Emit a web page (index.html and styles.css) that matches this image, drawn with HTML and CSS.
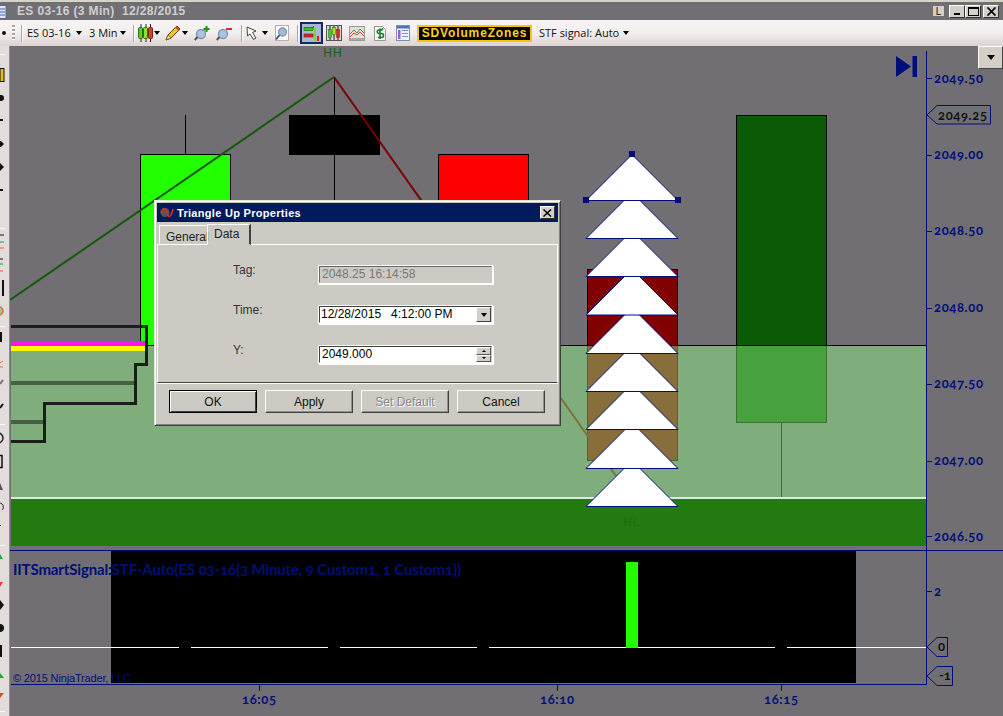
FILE: index.html
```html
<!DOCTYPE html>
<html lang="en">
<head>
<meta charset="utf-8">
<title>ES 03-16 (3 Min) 12/28/2015</title>
<link rel="stylesheet" href="styles.css">
</head>
<body>
<div class="app">
  <header class="titlebar">
    <svg class="doc-icon" width="7" height="14" viewBox="0 0 7 14"><rect x="-3" y="0.5" width="9" height="13" fill="#dfe6f2" stroke="#5a6a90"/><path d="M-2 4H5M-2 7H5M-2 10H5" stroke="#3c62c0"/></svg>
    <span class="title-text">ES 03-16 (3 Min)&nbsp; 12/28/2015</span>
    <span class="win-l">L</span>
    <span class="win-btn"><i class="glyph-min"></i></span>
    <span class="win-btn"><i class="glyph-max"></i></span>
    <span class="win-btn win-close">
      <svg width="11" height="9" viewBox="0 0 11 9"><path d="M1.5 0.5L9.5 8.5M9.5 0.5L1.5 8.5" stroke="#000" stroke-width="1.7"/></svg>
    </span>
  </header>

  <nav class="toolbar">
    <i class="stub-dot"></i>
    <i class="grip"></i>
    <i class="sep m6"></i>
    <span class="tb-text w43 m5">ES 03-16</span>
    <i class="arrow m6"></i>
    <span class="tb-text w25 m7">3 Min</span>
    <i class="arrow m6"></i>
    <i class="sep m7"></i>
    <svg class="ico m4" width="15" height="18" viewBox="0 0 15 18">
      <path d="M3 0V18M8 0V18M12.5 0V18" stroke="#222"/>
      <rect x="0.5" y="3.5" width="4" height="11" rx="1" fill="#5ad20a" stroke="#2c6a10"/>
      <rect x="5.5" y="3.5" width="4" height="11" rx="1" fill="#8ae02a" stroke="#2c6a10"/>
      <rect x="10.5" y="3.5" width="4" height="11" rx="1" fill="#e83a1c" stroke="#7a2010"/>
    </svg>
    <i class="arrow m1"></i>
    <svg class="ico m5" width="16" height="16" viewBox="0 0 16 16">
      <path d="M1 15L3 10L12 1L15 4L6 13Z" fill="#f6c71e" stroke="#5a4510"/>
      <path d="M1 15L3 10L6 13Z" fill="#f3dcb0" stroke="#5a4510" stroke-width=".6"/>
      <path d="M11 2L14 5" stroke="#c24a2a" stroke-width="2"/>
    </svg>
    <i class="arrow m1"></i>
    <svg class="ico m6" width="16" height="16" viewBox="0 0 16 16">
      <circle cx="7" cy="9" r="4.5" fill="#a8c4e8" stroke="#8a96a8" stroke-width="1.4"/>
      <path d="M3.5 12L0.8 15" stroke="#555" stroke-width="2"/>
      <path d="M12.5 1V7M9.500 4H15.500" stroke="#109a10" stroke-width="2"/>
    </svg>
    <svg class="ico m6" width="16" height="16" viewBox="0 0 16 16">
      <circle cx="7" cy="9" r="4.5" fill="#a8c4e8" stroke="#8a96a8" stroke-width="1.4"/>
      <path d="M3.5 12L0.8 15" stroke="#555" stroke-width="2"/>
      <path d="M10 4H16" stroke="#e02a2a" stroke-width="2"/>
    </svg>
    <i class="sep m9"></i>
    <svg class="ico m4" width="13" height="15" viewBox="0 0 13 15">
      <path d="M1 1L1.500 10L4 8L7.500 13.500L10 12L6.500 6.500L10 5Z" fill="#fff" stroke="#444"/>
    </svg>
    <i class="arrow m3"></i>
    <svg class="ico m7" width="14" height="16" viewBox="0 0 14 16">
      <rect x="0.500" y="0.500" width="13" height="15" fill="#fdfdfd" stroke="#b0b0b0"/>
      <circle cx="7.500" cy="7" r="4" fill="#9dbbe0" stroke="#8a96a8" stroke-width="1.400"/>
      <path d="M4.500 10L1 14.500" stroke="#555" stroke-width="2"/>
    </svg>
    <i class="sep m8"></i>
    <span class="tb-active m2">
      <svg width="17" height="17" viewBox="0 0 17 17">
        <path d="M1 3H9L11 1.500" stroke="#111" fill="none"/>
        <rect x="1" y="2.500" width="9" height="3" fill="#2ecb1a" stroke="#235a18" stroke-width=".6"/>
        <rect x="1" y="9" width="9" height="3" fill="#e02020" stroke="#6a1a18" stroke-width=".6"/>
        <rect x="11" y="3" width="2" height="13" fill="#6fe020"/>
        <rect x="14" y="11" width="2" height="5" fill="#e02020"/>
      </svg>
    </span>
    <svg class="ico m3" width="16" height="16" viewBox="0 0 16 16">
      <rect x="0.500" y="0.500" width="15" height="15" fill="#d8d4d0" stroke="#555"/>
      <path d="M4 1V15M8 1V15M12 1V15" stroke="#222"/>
      <rect x="2.500" y="4.500" width="3" height="8" fill="#3ccf20" stroke="#256a18" stroke-width=".5"/>
      <rect x="6.500" y="2.500" width="3" height="7" fill="#a6e620" stroke="#256a18" stroke-width=".5"/>
      <rect x="10.500" y="4.500" width="3" height="8" fill="#e02a20" stroke="#7a1a10" stroke-width=".5"/>
    </svg>
    <svg class="ico m7" width="16" height="15" viewBox="0 0 16 15">
      <rect x="0.500" y="0.500" width="15" height="14" fill="#e2e0da" stroke="#9a9a9a"/>
      <path d="M1 8L5 4L8 7L11 3L15 7" stroke="#2aa040" fill="none"/>
      <path d="M1 11L5 7L8 9L11 6L15 10" stroke="#d84030" fill="none"/>
      <path d="M1 12H15V14H1Z" fill="#a8a8a8"/>
    </svg>
    <svg class="ico m9" width="12" height="15" viewBox="0 0 12 15">
      <path d="M0.500 0.500H8.500L11.500 3.500V14.500H0.500Z" fill="#f6f6f2" stroke="#9a9a9a"/>
      <path d="M8.500 3.500V2M4 11.500H7.500A1.500 1.500 0 0 0 7.500 7.500H5A1.500 1.500 0 0 1 5 4H8.500M6 2.500V13" fill="none" stroke="#0d7a2c" stroke-width="1.500"/>
    </svg>
    <svg class="ico m10" width="14" height="16" viewBox="0 0 14 16">
      <rect x="0.500" y="0.500" width="13" height="15" fill="#eef2fa" stroke="#7e8cb0"/>
      <rect x="1" y="1" width="12" height="2.500" fill="#4a72c8"/>
      <rect x="2" y="5" width="2.500" height="9" fill="#9a5ae0"/>
      <path d="M6 5.500H12M6 8.500H12M6 11.500H12" stroke="#7a92c8"/>
    </svg>
    <span class="sd-zones m7">SDVolumeZones</span>
    <span class="tb-text w79 m7">STF signal: Auto</span>
    <i class="arrow m5"></i>
    <i class="toolbar-fill"></i>
  </nav>

  <div class="workspace">
    <aside class="sidebar">
      <svg width="9" height="670" viewBox="0 46 9 670">
        <path d="M0 54.500H5M0 228.500H5M0 326.500H5M0 424.500H5M0 545.500H5M0 711.500H5" stroke="#fff"/>
        <rect x="0" y="68.500" width="4" height="13" fill="#e2bc10" stroke="#111"/>
        <circle cx="1" cy="98" r="3" fill="#111"/>
        <rect x="0" y="119" width="3" height="2" fill="#111"/>
        <path d="M0 141H1L4 144L1 147H0Z" fill="#111"/>
        <path d="M0 163L4 167L0 171Z" fill="#111"/>
        <rect x="0" y="189" width="3" height="2" fill="#111"/>
        <path d="M0 235H4" stroke="#111"/><path d="M0 242H4" stroke="#1e9a4a"/><path d="M0 248H4" stroke="#ff5a20"/>
        <path d="M0 259H3" stroke="#111"/><path d="M0 264H3" stroke="#1e9a4a"/><path d="M0 271H3" stroke="#ff5a20"/>
        <rect x="2" y="280" width="2" height="16" fill="#111"/>
        <circle cx="-1" cy="311" r="4" fill="#9ccc9c" stroke="#e06a3a" stroke-width="1.500"/>
        <rect x="0" y="332" width="2" height="10" fill="#111"/>
        <path d="M0 363L3 361M0 367H3" stroke="#f07040"/>
        <path d="M0 384L3 380" stroke="#777" stroke-width="2"/>
        <path d="M0 408L3 404" stroke="#111" stroke-width="2"/>
        <circle cx="-2" cy="438" r="5" fill="none" stroke="#222" stroke-width="1.500"/>
        <rect x="-3" y="455.500" width="5" height="12" fill="none" stroke="#111" stroke-width="1.500"/>
        <path d="M0 483L3 490H0Z" fill="#555"/>
        <path d="M0 503A4 4 0 0 1 2 510" fill="none" stroke="#333"/>
        <rect x="0" y="525" width="1" height="1" fill="#333"/>
        <path d="M0 554L3 559H0Z" fill="#21a33a"/>
        <path d="M0 582H3L0 587Z" fill="#f0402a"/>
        <path d="M0 600L4 605L0 610Z" fill="#111"/>
        <circle cx="0" cy="628" r="4" fill="#111"/>
        <rect x="0" y="645" width="2" height="12" fill="#111"/>
        <path d="M0 673L4 678H0Z" fill="#21a33a"/>
        <path d="M0 693H4L0 698Z" fill="#f0402a"/>
      </svg>
    </aside>

    <main class="chart">
      <svg class="chart-svg" width="993" height="670" viewBox="10 46 993 670">
        <!-- price panel: bars -->
        <path class="wick" d="M185.500 115V154M334.500 77V345M483.500 154V345"/>
        <rect class="c-green" x="140.500" y="154.500" width="90" height="191"/>
        <rect class="c-black" x="289.500" y="115.500" width="90" height="39"/>
        <rect class="c-red" x="438.500" y="154.500" width="90" height="191"/>
        <rect class="c-maroon" x="587.500" y="269.500" width="90" height="191"/>
        <rect class="c-dark" x="736.500" y="115.500" width="90" height="307"/>
        <path class="wick" d="M781.500 423V497"/>
        <path class="swing-up" d="M10 300L334 77"/>
        <path class="swing-down" d="M334 77L616 476"/>

        <!-- supply zone drawn over the bars -->
        <rect class="zone" x="11" y="345" width="915" height="152"/>
        <path class="zone-top" d="M146 345.500H926"/>
        <rect class="zone-edge" x="11" y="497" width="915" height="2"/>
        <rect class="zone-low" x="11" y="499" width="915" height="47"/>

        <!-- volume steps -->
        <rect class="magenta" x="11" y="341" width="134" height="5"/>
        <rect class="yellow" x="11" y="346" width="134" height="5"/>
        <rect class="vol-bar" x="11" y="381" width="124" height="4"/>
        <rect class="vol-bar" x="11" y="420" width="33" height="4"/>
        <path class="steps" d="M11 326.500H146.500V364.500H135.500V403.500H44.500V441.500H11"/>

        <text class="swing-label hh" x="333" y="57" text-anchor="middle">HH</text>
        <text class="swing-label hl" x="632" y="526" text-anchor="middle">HL</text>

        <!-- triangles, bottom one first -->
        <g class="tri">
          <path d="M632 460.500L678 506.500H586Z"/>
          <path d="M632 422.500L678 468.500H586Z"/>
          <path d="M632 383.500L678 429.500H586Z"/>
          <path d="M632 345.500L678 391.500H586Z"/>
          <path d="M632 307.500L678 353.500H586Z"/>
          <path d="M632 269L678 315H586Z"/>
          <path d="M632 230.500L678 276.500H586Z"/>
          <path d="M632 192.500L678 238.500H586Z"/>
          <path d="M632 154.500L678 200.500H586Z"/>
        </g>
        <path class="blue-fill" d="M629 151h6v6h-6zM583 197h6v6h-6zM675 197h6v6h-6z"/>

        <!-- go-to-end marker -->
        <path class="blue-fill" d="M896 56L911 66.500L896 77ZM912.500 56H917V77H912.500Z"/>

        <!-- indicator panel -->
        <rect x="111" y="551" width="745" height="132" class="black-fill"/>
        <path class="white-line" d="M11 647.500H179M191 647.500H328M340 647.500H477M489 647.500H626M638 647.500H775M787 647.500H926"/>
        <rect class="c-bar" x="626" y="562" width="12" height="86"/>
        <text class="panel-title" x="13" y="575" textLength="448">IITSmartSignal:STF-Auto(ES 03-16(3 Minute, 9 Custom1, 1 Custom1))</text>
        <text class="copyright" x="13" y="682" textLength="118">© 2015 NinjaTrader, LLC</text>

        <!-- axes -->
        <path class="axis" d="M926.500 51V684.500H11M10 550.500H1003"/>
        <path class="axis" d="M926 78.500H932M926 155.500H932M926 231.500H932M926 308.500H932M926 384.500H932M926 461.500H932M926 536.500H932M926 591.500H932M259.500 685V691M557.500 685V691M781.500 685V691"/>
        <g class="axis-label">
          <text x="934" y="83" textLength="49">2049.50</text>
          <text x="934" y="159" textLength="49">2049.00</text>
          <text x="934" y="235" textLength="49">2048.50</text>
          <text x="934" y="312" textLength="49">2048.00</text>
          <text x="934" y="388" textLength="49">2047.50</text>
          <text x="934" y="465" textLength="49">2047.00</text>
          <text x="934" y="541" textLength="49">2046.50</text>
          <text x="934" y="596">2</text>
          <text x="259" y="704" text-anchor="middle" textLength="34">16:05</text>
          <text x="557" y="704" text-anchor="middle" textLength="34">16:10</text>
          <text x="781" y="704" text-anchor="middle" textLength="34">16:15</text>
        </g>
        <path class="tag" d="M927 115L937 105.500H990.500V124H937Z"/>
        <path class="tag" d="M927 647L937 637.500H947.500V656.500H937Z"/>
        <path class="tag" d="M927 676L937 666.500H952.500V685.500H937Z"/>
        <g class="tag-label">
          <text x="938" y="120" textLength="49">2049.25</text>
          <text x="938" y="651">0</text>
          <text x="939" y="680">-1</text>
        </g>
      </svg>
      <button class="scroll-btn" type="button"><i class="arrow arrow-big"></i></button>
    </main>
  </div>

  <section class="dialog">
    <div class="dlg-title">
      <svg width="14" height="11" viewBox="0 0 14 11"><circle cx="5" cy="5.500" r="4.500" fill="#555"/><path d="M1 6C3 0 5 0 7 6S11 10 13 2" fill="none" stroke="#d83020" stroke-width="1.500"/></svg>
      <span class="dlg-title-text">Triangle Up Properties</span>
      <span class="dlg-close"><svg width="9" height="8" viewBox="0 0 9 8"><path d="M0.500 0.500L8 7.500M8 0.500L0.500 7.500" stroke="#000" stroke-width="1.500"/></svg></span>
    </div>
    <div class="tabs">
      <span class="tab">General</span>
      <span class="tab tab-on">Data</span>
    </div>
    <div class="dlg-body">
      <div class="field">
        <label class="field-label">Tag:</label>
        <span class="input input-off">2048.25 16:14:58</span>
      </div>
      <div class="field">
        <label class="field-label">Time:</label>
        <span class="input"><span class="input-val">12/28/2015 &nbsp; 4:12:00 PM</span><span class="combo"><i class="arrow"></i></span></span>
      </div>
      <div class="field">
        <label class="field-label">Y:</label>
        <span class="input"><span class="input-val pad">2049.000</span><span class="spin"><b class="spin-btn"><i class="mini-up"></i></b><b class="spin-btn"><i class="mini-down"></i></b></span></span>
      </div>
    </div>
    <div class="dlg-foot">
      <button class="btn btn-default" type="button">OK</button>
      <button class="btn" type="button">Apply</button>
      <button class="btn btn-off" type="button">Set Default</button>
      <button class="btn" type="button">Cancel</button>
    </div>
  </section>
</div>
</body>
</html>
```

FILE: styles.css
```css
* { box-sizing: border-box; }
html, body { margin: 0; padding: 0; }
body { width: 1003px; height: 716px; overflow: hidden; background: #716f73; font-family: "Liberation Sans", Arial, sans-serif; }
.app { position: relative; width: 1003px; height: 716px; display: flex; flex-direction: column; }

/* title bar */
.titlebar { height: 20px; border-top: 2px solid #d6d3c8; background: #716f73; display: flex; align-items: center; padding-right: 4px; }
.doc-icon { flex: none; margin-top: 2px; }
.title-text { margin-left: 10px; color: #cfcfcf; font: bold 12px "Liberation Sans", sans-serif; letter-spacing: .35px; white-space: pre; }
.win-l { margin-left: auto; width: 11px; height: 10px; background: #d4d0c8; color: #111; font: 10px/11px "Liberation Sans", sans-serif; text-align: center; margin-right: 5px; }
.win-btn { width: 16px; height: 13px; background: #d4d0c8; border: 1px solid; border-color: #fff #333 #333 #fff; display: flex; align-items: center; justify-content: center; }
.win-close { margin-left: 2px; }
.glyph-min { display: block; width: 6px; height: 2px; background: #000; margin-top: 6px; }
.glyph-max { display: block; width: 11px; height: 9px; border: 1px solid #000; border-top-width: 2px; }

/* top toolbar */
.toolbar { position: relative; height: 26px; flex: none; display: flex; align-items: center; padding-left: 12px; background: linear-gradient(#f8f4f5, #f3eeee 50%, #dcd3d1); }
.stub-dot { position: absolute; left: 2px; top: 11px; width: 4px; height: 4px; border-radius: 50%; background: #111; }
.grip { width: 3px; height: 16px; background: repeating-linear-gradient(#a9a5a5 0 2px, #fff 2px 3px, transparent 3px 4px); }
.sep { width: 1px; height: 17px; background: #a8a4a4; box-shadow: 1px 0 #fff; flex: none; }
.tb-text { font: 11px/14px "Open Sans", "Liberation Sans", sans-serif; color: #111; white-space: nowrap; flex: none; }
.w43 { width: 43px; } .w25 { width: 25px; } .w79 { width: 79px; }
.arrow { display: block; flex: none; width: 0; height: 0; border: 3.5px solid transparent; border-top: 4px solid #000; border-bottom: 0; }
.ico { flex: none; display: block; }
.tb-active { flex: none; width: 23px; height: 22px; border: 1px solid #0f2c5c; background: #a9b8d6; display: flex; align-items: center; justify-content: center; outline: 1px solid #0f2c5c; outline-offset: -2px; }
.sd-zones { flex: none; width: 115px; height: 17px; background: #000; border: 2px solid #ffc400; color: #ffd21e; font: bold 12px/13px "Liberation Sans", sans-serif; text-align: center; letter-spacing: .85px; white-space: nowrap; }
.toolbar-fill { flex: 1; }
.m1 { margin-left: 1px; } .m2 { margin-left: 2px; } .m3 { margin-left: 3px; } .m4 { margin-left: 4px; } .m5 { margin-left: 5px; }
.m6 { margin-left: 6px; } .m7 { margin-left: 7px; } .m8 { margin-left: 8px; } .m9 { margin-left: 9px; } .m10 { margin-left: 10px; }

/* workspace */
.workspace { flex: 1; display: flex; min-height: 0; }
.sidebar { width: 10px; flex: none; background: #e2dcda; border-right: 1px solid #8f8d90; overflow: hidden; }
.sidebar svg { display: block; }
.chart { position: relative; flex: 1; min-width: 0; }
.chart-svg { display: block; }
.scroll-btn { position: absolute; right: 0; top: 0; width: 25px; height: 23px; padding: 0; background: #d4d0c8; border: 1px solid; border-color: #fff #444 #444 #fff; display: flex; align-items: center; justify-content: center; }
.arrow-big { border-width: 4.500px; border-top-width: 5px; border-bottom-width: 0; }

/* chart shapes */
.wick { stroke: #000; fill: none; }
.c-green { fill: #22ff00; stroke: #000; }
.c-black { fill: #000; stroke: #000; }
.c-red { fill: #ff0000; stroke: #000; }
.c-maroon { fill: #800000; stroke: #000; }
.c-dark { fill: #0d5a06; stroke: #000; }
.swing-up { stroke: #17570d; stroke-width: 2; fill: none; }
.swing-down { stroke: #7a0000; stroke-width: 2; fill: none; }
.zone { fill: rgb(145, 255, 136); fill-opacity: .43; }
.zone-top { stroke: #000; }
.zone-edge { fill: #dfe9dc; }
.zone-low { fill: #237b10; }
.magenta { fill: #ff14f0; }
.yellow { fill: #ffff00; }
.vol-bar { fill: #4a5e46; }
.steps { fill: none; stroke: #1b1d1b; stroke-width: 3; }
.swing-label { font: 12px "Liberation Sans", sans-serif; letter-spacing: 1px; }
.hh { fill: #1a5c10; }
.hl { fill: #1d6c12; }
.tri path { fill: #fff; stroke: #000e7a; stroke-width: 1; }
.blue-fill { fill: #000e7a; }
.black-fill { fill: #000; }
.white-line { stroke: #fff; stroke-width: 1; fill: none; shape-rendering: crispEdges; }
.c-bar { fill: #22ff00; }
.panel-title { fill: #000e7a; font: bold 15px "Lato", "DejaVu Serif", serif; font-variant-numeric: oldstyle-nums; }
.copyright { fill: #000e7a; font: 11px "Liberation Sans", sans-serif; }
.axis { stroke: #000e7a; fill: none; stroke-width: 1; }
.axis-label text { fill: #000e7a; font: bold 13px "Lato", "DejaVu Serif", serif; font-variant-numeric: oldstyle-nums; }
.tag { fill: none; stroke: #000e7a; stroke-width: 1; }
.tag-label text { fill: #111; font: bold 13px "Lato", "DejaVu Serif", serif; font-variant-numeric: oldstyle-nums; }

/* dialog */
.dialog { position: absolute; left: 154px; top: 200px; width: 407px; height: 226px; background: #cdcac3; border: 1px solid; border-color: #e8e6e0 #404040 #404040 #e8e6e0; box-shadow: inset 1px 1px #fff, inset -1px -1px #808080; padding: 2px 2px 0; display: flex; flex-direction: column; font: 12px "Liberation Sans", sans-serif; color: #111; }
.dlg-title { height: 19px; flex: none; background: #001a5c; display: flex; align-items: center; padding: 0 3px 0 3px; }
.dlg-title-text { margin-left: 3px; color: #fff; font: bold 11px "Liberation Sans", sans-serif; letter-spacing: .3px; }
.dlg-close { margin-left: auto; width: 15px; height: 13px; background: #d4d0c8; border: 1px solid; border-color: #fff #333 #333 #fff; display: flex; align-items: center; justify-content: center; }
.tabs { height: 22px; flex: none; display: flex; align-items: flex-end; padding-left: 2px; }
.tab { width: 48px; height: 19px; padding: 4px 0 0 6px; border: 1px solid; border-color: #fff transparent transparent #fff; color: #222; }
.tab-on { width: 44px; height: 21px; padding: 2px 0 0 6px; border-color: #fff #404040 #cdcac3 #fff; border-right-width: 2px; position: relative; top: 1px; }
.dlg-body { height: 139px; flex: none; border-top: 1px solid #fff; border-left: 1px solid #fff; border-right: 1px solid #fff; border-bottom: 1px solid #404040; display: flex; flex-direction: column; gap: 21px; padding: 20px 0 0 75px; box-shadow: 0 1px #fff; }
.field { display: flex; height: 19px; }
.field-label { width: 85px; margin-top: -2px; color: #333; }
.input { width: 175px; height: 19px; background: #fff; border: 2px solid; border-color: #404040 #cdcac3 #fff #404040; outline: 1px solid #fff; outline-offset: -1px; display: flex; align-items: center; justify-content: space-between; line-height: 15px; box-shadow: 1px 1px #fff; color: #000; }
.input-off { background: #cdcac3; color: #777; padding-left: 2px; border-color: #666 #cdcac3 #cdcac3 #666; }
.input-val { padding-left: 1px; white-space: pre; }
.pad { padding-left: 2px; }
.combo { width: 15px; height: 15px; background: #d4d0c8; border: 1px solid; border-color: #fff #404040 #404040 #fff; display: flex; align-items: center; justify-content: center; }
.spin { width: 15px; height: 15px; display: flex; flex-direction: column; }
.spin-btn { height: 8px; background: #d4d0c8; border: 1px solid; border-color: #fff #555 #555 #fff; display: flex; align-items: center; justify-content: center; }
.mini-up { border: 2px solid transparent; border-bottom: 2px solid #000; border-top: 0; }
.mini-down { border: 2px solid transparent; border-top: 2px solid #000; border-bottom: 0; }
.dlg-foot { display: flex; gap: 8px; padding: 7px 0 0 12px; }
.btn { width: 88px; height: 23px; padding: 0; background: #cdcac3; border: 1px solid; border-color: #fff #404040 #404040 #fff; box-shadow: inset -1px -1px #909090; font: 12px "Liberation Sans", sans-serif; color: #111; }
.btn-default { outline: 1px solid #000; outline-offset: -1px; box-shadow: inset 1px 1px #fff, inset -1px -1px #404040; }
.btn-off { color: #8a8a8a; text-shadow: 1px 1px #fff; }
```
